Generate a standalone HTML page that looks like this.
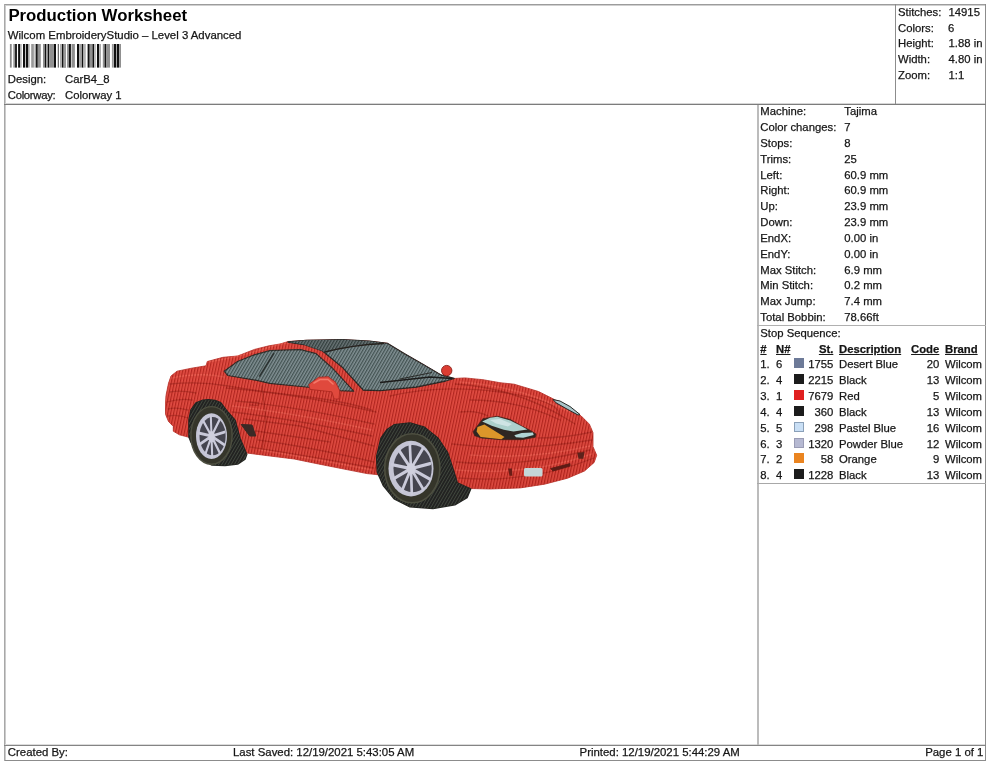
<!DOCTYPE html>
<html lang="en">
<head>
<meta charset="utf-8">
<title>Production Worksheet</title>
<style>
*{box-sizing:border-box;margin:0;padding:0}
html,body{width:990px;height:762px;overflow:hidden;background:#fff}
body{position:relative;font-family:"Liberation Sans",Arial,Helvetica,sans-serif;font-size:11.3px;line-height:15.8px;color:#141414}
.abs{position:absolute}
.ln{position:absolute;background:#8c8c8c}
.t{position:absolute;white-space:nowrap;height:15.8px;-webkit-text-stroke:0.25px #1a1a1a}
.r{text-align:right}
.f{font-size:11.4px}
.k{letter-spacing:-0.3px}
.b{font-weight:bold;text-decoration:underline}
.sw{position:absolute;width:10px;height:10px;left:794px}
#txt{position:absolute;left:0;top:0;width:990px;height:762px;will-change:transform}
#title{position:absolute;left:8.4px;top:5px;font-size:16.8px;line-height:22px;font-weight:bold;white-space:nowrap;color:#000}
</style>
</head>
<body>
<!-- frame lines -->
<div class="ln" style="left:4px;top:4px;width:982px;height:1px;background:#9c9c9c"></div>
<div class="ln" style="left:5px;top:5px;width:980px;height:1px;background:#d0d0d0"></div>
<div class="ln" style="left:4px;top:760px;width:982px;height:1px"></div>
<div class="ln" style="left:4px;top:4px;width:1px;height:757px;background:#a8a8a8"></div>
<div class="ln" style="left:5px;top:5px;width:1px;height:755px;background:#cccccc"></div>
<div class="ln" style="left:985px;top:4px;width:1px;height:757px"></div>
<div class="ln" style="left:5px;top:103px;width:980px;height:1px;background:#d6d6d6"></div>
<div class="ln" style="left:4px;top:104px;width:982px;height:1px;background:#7c7c7c"></div>
<div class="ln" style="left:5px;top:744px;width:980px;height:1px;background:#dcdcdc"></div>
<div class="ln" style="left:4px;top:745px;width:982px;height:1px;background:#848484"></div>
<div class="ln" style="left:895px;top:4px;width:1px;height:100px"></div>
<div class="ln" style="left:757px;top:105px;width:2px;height:640px;background:#bcbcbc"></div>
<div class="ln" style="left:757px;top:325px;width:229px;height:1px;background:#b0b0b0"></div>
<div class="ln" style="left:757px;top:483px;width:229px;height:1px;background:#a8a8a8"></div>

<div id="txt">
<!-- header left -->
<div id="title">Production Worksheet</div>
<div class="t f" style="left:7.8px;top:28px">Wilcom EmbroideryStudio – Level 3 Advanced</div>
<svg class="abs" id="barcode" style="left:0;top:0" width="130" height="72" viewBox="0 0 130 72" shape-rendering="auto"><rect x="9.9" y="44" width="1.8" height="23.6" fill="#888888"/><rect x="13.3" y="44" width="1.8" height="23.6" fill="#999999"/><rect x="15.1" y="44" width="1.8" height="23.6" fill="#101010"/><rect x="18.1" y="44" width="2.1" height="23.6" fill="#101010"/><rect x="20.2" y="44" width="1.5" height="23.6" fill="#b0b0b0"/><rect x="23.0" y="44" width="2.1" height="23.6" fill="#101010"/><rect x="25.1" y="44" width="0.9" height="23.6" fill="#c0c0c0"/><rect x="26.0" y="44" width="2.1" height="23.6" fill="#101010"/><rect x="28.1" y="44" width="1.5" height="23.6" fill="#a0a0a0"/><rect x="31.2" y="44" width="2.7" height="23.6" fill="#999999"/><rect x="33.9" y="44" width="1.8" height="23.6" fill="#d0d0d0"/><rect x="35.7" y="44" width="2.1" height="23.6" fill="#181818"/><rect x="37.8" y="44" width="3.0" height="23.6" fill="#909090"/><rect x="43.0" y="44" width="1.8" height="23.6" fill="#909090"/><rect x="44.8" y="44" width="1.5" height="23.6" fill="#101010"/><rect x="46.3" y="44" width="1.5" height="23.6" fill="#999999"/><rect x="47.8" y="44" width="1.5" height="23.6" fill="#101010"/><rect x="49.3" y="44" width="4.5" height="23.6" fill="#909090"/><rect x="53.9" y="44" width="2.1" height="23.6" fill="#101010"/><rect x="57.8" y="44" width="0.9" height="23.6" fill="#303030"/><rect x="60.2" y="44" width="1.2" height="23.6" fill="#999999"/><rect x="61.8" y="44" width="1.8" height="23.6" fill="#101010"/><rect x="63.6" y="44" width="2.4" height="23.6" fill="#909090"/><rect x="64.0" y="44" width="1.8" height="23.6" fill="#999999"/><rect x="67.0" y="44" width="1.8" height="23.6" fill="#999999"/><rect x="68.8" y="44" width="2.1" height="23.6" fill="#101010"/><rect x="71.0" y="44" width="0.9" height="23.6" fill="#c8c8c8"/><rect x="71.9" y="44" width="3.0" height="23.6" fill="#909090"/><rect x="77.0" y="44" width="2.1" height="23.6" fill="#101010"/><rect x="79.2" y="44" width="2.7" height="23.6" fill="#a0a0a0"/><rect x="81.9" y="44" width="1.5" height="23.6" fill="#101010"/><rect x="83.4" y="44" width="2.4" height="23.6" fill="#b0b0b0"/><rect x="87.6" y="44" width="2.1" height="23.6" fill="#101010"/><rect x="89.8" y="44" width="2.7" height="23.6" fill="#909090"/><rect x="92.5" y="44" width="1.8" height="23.6" fill="#101010"/><rect x="94.3" y="44" width="1.8" height="23.6" fill="#c0c0c0"/><rect x="97.0" y="44" width="2.1" height="23.6" fill="#101010"/><rect x="99.2" y="44" width="1.8" height="23.6" fill="#a8a8a8"/><rect x="102.8" y="44" width="1.8" height="23.6" fill="#909090"/><rect x="104.6" y="44" width="1.8" height="23.6" fill="#101010"/><rect x="106.4" y="44" width="3.6" height="23.6" fill="#909090"/><rect x="111.9" y="44" width="1.2" height="23.6" fill="#999999"/><rect x="113.7" y="44" width="2.4" height="23.6" fill="#101010"/><rect x="116.7" y="44" width="2.4" height="23.6" fill="#101010"/><rect x="119.2" y="44" width="1.8" height="23.6" fill="#909090"/></svg>
<div class="t" style="left:7.8px;top:72px">Design:</div><div class="t" style="left:65px;top:72px">CarB4_8</div>
<div class="t k" style="left:7.8px;top:88px">Colorway:</div><div class="t" style="left:65px;top:88px">Colorway 1</div>
<!-- header right -->
<div class="t" style="left:898px;top:5px">Stitches:</div><div class="t" style="left:948.5px;top:5px">14915</div>
<div class="t" style="left:898px;top:21px">Colors:</div><div class="t" style="left:948px;top:21px">6</div>
<div class="t" style="left:898px;top:36px">Height:</div><div class="t" style="left:948.5px;top:36px">1.88 in</div>
<div class="t" style="left:898px;top:52px">Width:</div><div class="t" style="left:948.5px;top:52px">4.80 in</div>
<div class="t" style="left:898px;top:68px">Zoom:</div><div class="t" style="left:948.5px;top:68px">1:1</div>
<!-- machine info -->
<div class="t" style="left:760.3px;top:104px">Machine:</div><div class="t" style="left:844.3px;top:104px">Tajima</div>
<div class="t" style="left:760.3px;top:120px">Color changes:</div><div class="t" style="left:844.3px;top:120px">7</div>
<div class="t" style="left:760.3px;top:136px">Stops:</div><div class="t" style="left:844.3px;top:136px">8</div>
<div class="t" style="left:760.3px;top:152px">Trims:</div><div class="t" style="left:844.3px;top:152px">25</div>
<div class="t" style="left:760.3px;top:168px">Left:</div><div class="t" style="left:844.3px;top:168px">60.9 mm</div>
<div class="t" style="left:760.3px;top:183px">Right:</div><div class="t" style="left:844.3px;top:183px">60.9 mm</div>
<div class="t" style="left:760.3px;top:199px">Up:</div><div class="t" style="left:844.3px;top:199px">23.9 mm</div>
<div class="t" style="left:760.3px;top:215px">Down:</div><div class="t" style="left:844.3px;top:215px">23.9 mm</div>
<div class="t" style="left:760.3px;top:231px">EndX:</div><div class="t" style="left:844.3px;top:231px">0.00 in</div>
<div class="t" style="left:760.3px;top:247px">EndY:</div><div class="t" style="left:844.3px;top:247px">0.00 in</div>
<div class="t" style="left:760.3px;top:263px">Max Stitch:</div><div class="t" style="left:844.3px;top:263px">6.9 mm</div>
<div class="t" style="left:760.3px;top:278px">Min Stitch:</div><div class="t" style="left:844.3px;top:278px">0.2 mm</div>
<div class="t" style="left:760.3px;top:294px">Max Jump:</div><div class="t" style="left:844.3px;top:294px">7.4 mm</div>
<div class="t" style="left:760.3px;top:310px">Total Bobbin:</div><div class="t" style="left:844.3px;top:310px">78.66ft</div>
<div class="t" style="left:760.3px;top:326px">Stop Sequence:</div>
<div class="t b" style="left:760.3px;top:342px">#</div><div class="t b" style="left:776px;top:342px">N#</div><div class="t b r" style="right:156.7px;top:342px">St.</div><div class="t b" style="left:839px;top:342px">Description</div><div class="t b r" style="right:50.7px;top:342px">Code</div><div class="t b" style="left:945px;top:342px">Brand</div>
<div class="t" style="left:760.3px;top:357px">1.</div><div class="t" style="left:776px;top:357px">6</div><div class="sw" style="top:358px;background:#6d7a98"></div><div class="t r" style="right:156.7px;top:357px">1755</div><div class="t" style="left:839px;top:357px">Desert Blue</div><div class="t r" style="right:50.7px;top:357px">20</div><div class="t" style="left:945px;top:357px">Wilcom</div>
<div class="t" style="left:760.3px;top:373px">2.</div><div class="t" style="left:776px;top:373px">4</div><div class="sw" style="top:374px;background:#1c1c1c"></div><div class="t r" style="right:156.7px;top:373px">2215</div><div class="t" style="left:839px;top:373px">Black</div><div class="t r" style="right:50.7px;top:373px">13</div><div class="t" style="left:945px;top:373px">Wilcom</div>
<div class="t" style="left:760.3px;top:389px">3.</div><div class="t" style="left:776px;top:389px">1</div><div class="sw" style="top:390px;background:#e02020"></div><div class="t r" style="right:156.7px;top:389px">7679</div><div class="t" style="left:839px;top:389px">Red</div><div class="t r" style="right:50.7px;top:389px">5</div><div class="t" style="left:945px;top:389px">Wilcom</div>
<div class="t" style="left:760.3px;top:405px">4.</div><div class="t" style="left:776px;top:405px">4</div><div class="sw" style="top:406px;background:#1c1c1c"></div><div class="t r" style="right:156.7px;top:405px">360</div><div class="t" style="left:839px;top:405px">Black</div><div class="t r" style="right:50.7px;top:405px">13</div><div class="t" style="left:945px;top:405px">Wilcom</div>
<div class="t" style="left:760.3px;top:421px">5.</div><div class="t" style="left:776px;top:421px">5</div><div class="sw" style="top:422px;background:#c9dff5;border:1px solid #8aa0b8"></div><div class="t r" style="right:156.7px;top:421px">298</div><div class="t" style="left:839px;top:421px">Pastel Blue</div><div class="t r" style="right:50.7px;top:421px">16</div><div class="t" style="left:945px;top:421px">Wilcom</div>
<div class="t" style="left:760.3px;top:437px">6.</div><div class="t" style="left:776px;top:437px">3</div><div class="sw" style="top:438px;background:#b6b9d2;border:1px solid #9a9cb5"></div><div class="t r" style="right:156.7px;top:437px">1320</div><div class="t" style="left:839px;top:437px">Powder Blue</div><div class="t r" style="right:50.7px;top:437px">12</div><div class="t" style="left:945px;top:437px">Wilcom</div>
<div class="t" style="left:760.3px;top:452px">7.</div><div class="t" style="left:776px;top:452px">2</div><div class="sw" style="top:453px;background:#ea8420"></div><div class="t r" style="right:156.7px;top:452px">58</div><div class="t" style="left:839px;top:452px">Orange</div><div class="t r" style="right:50.7px;top:452px">9</div><div class="t" style="left:945px;top:452px">Wilcom</div>
<div class="t" style="left:760.3px;top:468px">8.</div><div class="t" style="left:776px;top:468px">4</div><div class="sw" style="top:469px;background:#1c1c1c"></div><div class="t r" style="right:156.7px;top:468px">1228</div><div class="t" style="left:839px;top:468px">Black</div><div class="t r" style="right:50.7px;top:468px">13</div><div class="t" style="left:945px;top:468px">Wilcom</div>
<!-- footer -->
<div class="t f" style="left:7.8px;top:745px">Created By:</div><div class="t f" style="left:233px;top:745px">Last Saved: 12/19/2021 5:43:05 AM</div><div class="t f" style="left:579.6px;top:745px">Printed: 12/19/2021 5:44:29 AM</div><div class="t f r" style="right:6.6px;top:745px">Page 1 of 1</div>
</div>
<!-- design -->
<svg class="abs" id="car" style="left:0;top:0" width="990" height="762" viewBox="0 0 990 762">
<defs>
<pattern id="st" width="2.9" height="8" patternUnits="userSpaceOnUse" patternTransform="rotate(12)">
<rect x="0" y="0" width="1.2" height="8" fill="#8a100a" opacity="0.5"/>
<rect x="1.6" y="0" width="0.9" height="8" fill="#ff8a78" opacity="0.36"/>
</pattern>
<pattern id="sg" width="2.7" height="8" patternUnits="userSpaceOnUse" patternTransform="rotate(30)">
<rect x="0" y="0" width="1.2" height="8" fill="#1c2a28" opacity="0.5"/>
<rect x="1.5" y="0" width="0.9" height="8" fill="#c0ccd2" opacity="0.4"/>
</pattern>
<pattern id="sk" width="2.7" height="8" patternUnits="userSpaceOnUse" patternTransform="rotate(30)">
<rect x="0" y="0" width="0.9" height="8" fill="#6a7468" opacity="0.42"/>
</pattern>
<linearGradient id="bodyg" x1="0" y1="0" x2="0" y2="1">
<stop offset="0" stop-color="#dc4038"/>
<stop offset="0.5" stop-color="#d83c34"/>
<stop offset="1" stop-color="#d23830"/>
</linearGradient>
<path id="bodyp" d="M165.5,403 L166,395.5 L168.5,383.3 L171,376 L177,371.2 L191.5,368.2 L206,365.8 L207.3,361.5 L223,357.3 L237.6,356 L254.5,349.4 L269,345.8 L280,344 L288.2,341.5 L306.4,340.3 L342.7,339.7 L369.4,341.2 L387.3,343.3 L404.2,353.6 L422.4,364 L440.6,374.8 L454,378.5 L464.8,377.9 L483,379.7 L500,382.7 L514.2,384.2 L538.5,391.5 L553,398.8 L568.8,407.3 L581,415.8 L589.4,424.2 L593,432.7 L593,446.7 L596.7,455.2 L594.2,462.4 L584.5,471 L567.6,478.2 L544.5,484.2 L520.3,487.9 L490,489 L470.6,488.5 L454.8,486 L376,474.5 L367,473.6 L342.7,468.8 L318.5,464 L294.2,459 L270,456 L246.7,453 L231,448 L189,437.3 L179.4,434.8 L173.3,431.2 L173.3,426.4 L168.5,421.5 L165.5,414.2 Z"/>
<path id="rearw" d="M189,437 L189,420 L191,410 L196,403 L203,400.3 L208.5,399.7 L215,400.5 L220.6,402.7 L228,412.4 L235,420.3 L240,438.5 L246.7,454.2 L245,459 L237.6,464 L225,465.5 L212,465 L203,460 L196,451 L191,442 Z"/>
<path id="frontw" d="M376.7,456.4 L381,438.2 L387,429.7 L394.2,424.8 L410,423 L424.5,427.3 L437.9,438.2 L447.6,452.7 L453.6,471 L457.3,483 L470.6,489 L467,497.6 L454.8,504.8 L433,508.5 L410,506.7 L394.2,498.8 L383.3,485.5 L377.3,472 Z"/>
<path id="winp" d="M224.2,371.2 L237.6,361.5 L254.5,354.8 L270,350.6 L300.3,349.6 L316,353.6 L333,368.8 L353.6,391.2 L340.3,390.6 L306.4,387 L270,383.3 L257,380.3 L228,375.5 Z"/>
<path id="wsp" d="M288,342 L306.4,340.3 L342.7,339.7 L369.4,341.2 L387.3,343.3 L404.2,353.6 L422.4,364 L440.6,374.8 L454,378.5 L445.5,381 L416.4,387 L380,390.6 L363.3,390 L342.7,367.6 L322,350.6 L304,344.5 Z"/>
<filter id="soft" x="-5%" y="-5%" width="110%" height="110%"><feGaussianBlur stdDeviation="0.35"/></filter>
</defs>
<g filter="url(#soft)">
<!-- body -->
<use href="#bodyp" fill="url(#bodyg)" stroke="#b83028" stroke-width="0.8" stroke-linejoin="round"/>
<!-- body creases -->
<g fill="none" stroke="#8a1610" stroke-opacity="0.55" stroke-width="1.3" stroke-linecap="round">
<path d="M170,384 Q200,381 228,386 T300,396 T372,410"/>
<path d="M167,402 Q180,398 192,400"/>
<path d="M168,416 Q178,414 188,418"/>
<path d="M232,412 Q300,420 372,436"/>
<path d="M256,431 L330,442"/>
<path d="M258,440 Q310,447 374,462"/>
<path d="M250,447 Q310,456 374,468"/>
<path d="M390,396 Q440,384 500,392 T560,416"/>
<path d="M455,384 Q520,388 575,424"/>
<path d="M452,444 Q520,452 592,440"/>
<path d="M456,462 Q520,468 590,450"/>
<path d="M458,478 Q530,484 594,458"/>
<path d="M262,386 L266,420 L262,450"/>
<path d="M226,388 Q300,394 376,412"/>
<path d="M236,401 Q300,407 374,424"/>
<path d="M244,419 L300,426 L374,446"/>
<path d="M170,392 Q180,390 196,393"/>
<path d="M168,409 Q176,407 188,410"/>
<path d="M470,400 Q520,400 560,420"/>
<path d="M460,412 Q476,410 488,416"/>
<path d="M538,438 Q566,438 592,432"/>
<path d="M250,402 L258,402.6 L258,405.4 L250,405"/>
</g>
<g fill="none" stroke="#f4685a" stroke-opacity="0.55" stroke-width="1.5" stroke-linecap="round">
<path d="M172,378 Q200,372 224,377"/>
<path d="M232,406 Q300,414 372,430"/>
<path d="M260,450 Q310,458 372,470"/>
<path d="M460,382 Q520,386 570,412"/>
<path d="M456,470 Q530,476 592,454"/>
<path d="M208,362 Q240,357 270,347 T322,348"/>
<path d="M470,455 Q530,460 590,446"/>
</g>
<use href="#bodyp" fill="url(#st)"/>
<!-- glass -->
<use href="#winp" fill="#6a7a7c" stroke="#2a2420" stroke-width="1.2" stroke-linejoin="round"/>
<use href="#winp" fill="url(#sg)"/>
<use href="#wsp" fill="#6a7a7c" stroke="#26221f" stroke-width="1.3" stroke-linejoin="round"/>
<path d="M288,342 L306.4,340.3 L342.7,339.7 L369.4,341.2 L384,343.2 Q352,345 325,352 L304,344.5 Z" fill="#4a5454"/>
<use href="#wsp" fill="url(#sg)"/>
<path d="M274,353 L259.4,376.7" stroke="#2c3230" stroke-width="1.6" fill="none"/>
<path d="M325,352 Q352,345 384,343.5" stroke="#26221f" stroke-width="1.3" fill="none"/>
<path d="M380,382.5 L430,377 L452,378.5" stroke="#1e1c1a" stroke-width="1.6" fill="none"/>
<path d="M400,379 L432,372.5" stroke="#2a2a28" stroke-width="1" fill="none"/>
<!-- mirrors -->
<path d="M308.8,384.5 L318.5,377.3 L328.2,376.7 L335.5,382.1 L339.7,390.6 L339,399 L334.2,399 L331.8,391.8 L310,389.4 Z" fill="#e04a3e" stroke="#a8261e" stroke-width="0.8" stroke-linejoin="round"/>
<path d="M314,383 L320,379.5 L328,379.5 L333,384" fill="none" stroke="#f47868" stroke-width="1.6" stroke-linecap="round"/>
<circle cx="446.7" cy="370.6" r="5.2" fill="#dc3c32" stroke="#8a1c16" stroke-width="0.9"/>
<!-- side vent -->
<path d="M241.2,424.5 L252,425 L255.8,436 L249.7,436 Z" fill="#3a2a26" stroke="#3a2a26" stroke-width="1" stroke-linejoin="round"/>
<!-- wheels -->
<use href="#rearw" fill="#222420" stroke="#222420" stroke-width="1.6" stroke-linejoin="round"/>
<use href="#rearw" fill="url(#sk)"/>
<ellipse cx="211.5" cy="435.4" rx="20.6" ry="28.8" fill="#34352c" stroke="#4e4f40" stroke-width="1.4"/>
<use href="#frontw" fill="#222420" stroke="#222420" stroke-width="1.6" stroke-linejoin="round"/>
<use href="#frontw" fill="url(#sk)"/>
<ellipse cx="412.3" cy="468.3" rx="27.6" ry="34.5" fill="#34352c" stroke="#4e4f40" stroke-width="1.6"/>
<!-- rims -->
<g transform="translate(211.5 436.1) scale(0.68 1)">
<circle r="22.8" fill="#c4c4d4"/>
<circle cx="1.6" r="19.2" fill="#45454f"/>
<g stroke="#cacada" stroke-width="3" stroke-linecap="round">
<path d="M0,0 L-1,-20 M0,0 L11.6,-16 M0,0 L19,-4 M0,0 L18.4,8.5 M0,0 L12,16.6 M0,0 L1,20 M0,0 L-9,18 M0,0 L-17,8 M0,0 L-19,-3 M0,0 L-12,-15"/>
</g>
<circle r="4.6" fill="#d0d0de"/>
</g>
<g transform="translate(411 468.6) scale(0.81 1)">
<circle r="27.8" fill="#c4c4d4"/>
<circle cx="2" r="23.6" fill="#45454f"/>
<g stroke="#cacada" stroke-width="3.3" stroke-linecap="round">
<path d="M0,0 L-1.5,-25 M0,0 L14.5,-19.8 M0,0 L23.5,-5 M0,0 L23,10.5 M0,0 L15,20.5 M0,0 L1,25 M0,0 L-11,22 M0,0 L-21,10 M0,0 L-23.5,-4 M0,0 L-15,-18.5"/>
</g>
<circle r="5.4" fill="#d0d0de"/>
</g>
<!-- headlight -->
<path d="M473,431.7 L482.8,418.7 L497.3,416.3 L510.3,419.5 L521.6,426 L529.6,430 L536,434 L535.3,437.3 L521.6,439.7 L501.4,439.7 L481.2,438 L474.7,435.7 Z" fill="#2e2824" stroke="#4a2018" stroke-width="0.7" stroke-linejoin="round"/>
<path d="M477.5,427 L484.4,424.4 L495.7,431.5 L504.5,437 L501.4,439.3 L480.6,437 L476.6,431.5 Z" fill="#dc962a"/>
<path d="M482.2,421.6 L490,417.8 L497.3,416.8 L510.3,420.4 L521.6,426.2 L527.4,429.4 L513.5,431.6 L503.8,429.8 L491.7,425.8 Z" fill="#acd0cc"/>
<path d="M490,420 L500,419 L512,424 L508,426.5 L496,423.5 Z" fill="#d8e8ea" opacity="0.8"/>
<path d="M514.3,435.3 L521.6,432.9 L532.9,432.5 L533.7,434.9 L523.2,437.7 L516,437.3 Z" fill="#b0d4d4"/>
<path d="M553,399.5 L560,401 L570,406.5 L580,414.5 L578,415 L566,408.5 L556,402.8 Z" fill="#a8c4c8" stroke="#2a2a28" stroke-width="1"/>
<!-- fog light, grille -->
<rect x="524" y="468" width="18.5" height="8.5" rx="1.5" fill="#c4d6d8"/>
<path d="M550.6,468.5 L570,463.6 L570,466 L553,471 Z" fill="#5c1c14" stroke="#5c1c14" stroke-width="0.8"/>
<path d="M577.3,452.7 L584.5,452 L583.3,458.8 L578.5,458.8 Z" fill="#5c241a"/>
<path d="M508.2,468.5 L512,468.5 L512.4,475.8 L509.4,475.8 Z" fill="#6a1e16"/>
</g>
</svg>
</body>
</html>
